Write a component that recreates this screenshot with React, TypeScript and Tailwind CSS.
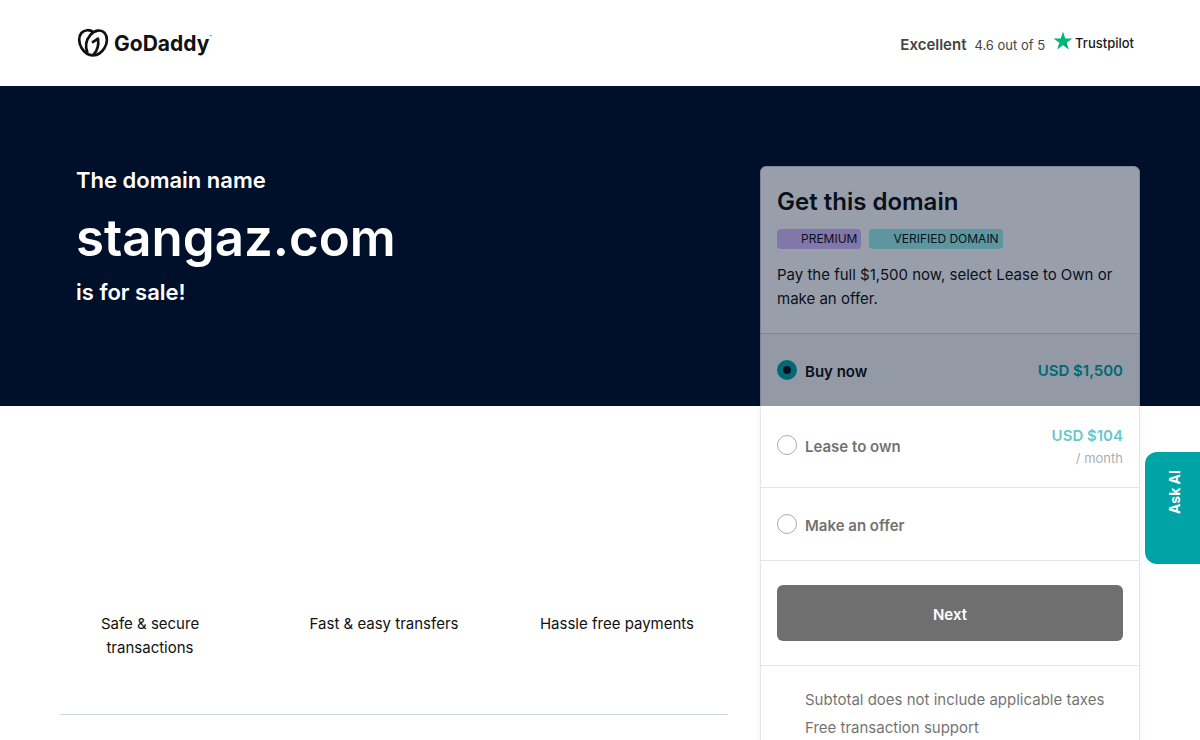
import React from 'react';

const options = [
  { id: 'buy', label: 'Buy now', price: 'USD $1,500', period: '', rowClass: 'h-18' },
  { id: 'lease', label: 'Lease to own', price: 'USD $104', period: '/ month', rowClass: 'h-[82px] border-b pb-1' },
  { id: 'offer', label: 'Make an offer', price: '', period: '', rowClass: 'h-[73px] border-b' },
];

const benefits = ['Safe & secure transactions', 'Fast & easy transfers', 'Hassle free payments'];

const notes = ['Subtotal does not include applicable taxes', 'Free transaction support'];

const Header: React.FC = () => {
  return (
    <header className="bg-white">
      <div className="mx-auto flex h-[86px] max-w-[1080px] items-center justify-between pr-1.5 pl-4">
        <a href="#" className="flex items-center gap-1 text-[#111]">
          <svg
            className="h-8 w-[34px]"
            viewBox="0 0 34 32"
            fill="none"
            stroke="currentColor"
            strokeWidth="2.7"
            strokeLinejoin="round"
            aria-hidden="true"
          >
            <path d="M17.500 5.200C13.500 2.300 8.500 2.600 5.400 6C2.300 9.600 2.500 15.800 5.600 21C8.400 25.600 12.500 28.300 17 28.300C21.500 28.300 25.800 25.400 28.500 21C31.600 15.800 31.700 9.600 28.700 6C25 1.900 18.500 3 14.200 8.200C10.300 12.900 8.900 19.500 11.500 25.800" />
            <path d="M16 15.600L22 11.700C23 17.800 21.600 23.500 17.200 28" />
          </svg>
          <span className="flex items-start pt-0.5 text-[21px] leading-7 font-bold">
            GoDaddy<span className="text-[4px] leading-4">™</span>
          </span>
        </a>
        <a href="#" className="flex items-center gap-2 leading-5 text-[#444]">
          <span className="pt-1 text-[15px] font-semibold">Excellent</span>
          <span className="pt-1 text-[13px]">4.6 out of 5</span>
          <span className="flex items-center gap-0.5">
            <svg className="mb-1 h-5 w-5" viewBox="0 0 20 20" aria-hidden="true">
              <path fill="#00b67a" d="M10 .5l2.250 6.900h7.250l-5.870 4.260 2.240 6.900L10 14.300l-5.870 4.260 2.240-6.900L.5 7.400h7.250z" />
              <path fill="#009765" d="M14.130 13.200l-.5-1.540L10 14.300z" />
            </svg>
            <span className="text-[13px] font-medium text-[#191919]">Trustpilot</span>
          </span>
        </a>
      </div>
    </header>
  );
};

const DomainCard: React.FC = () => {
  const [selected, setSelected] = React.useState('buy');

  return (
    <form className="mt-20 w-[380px] shrink-0 rounded-md border border-gray-300 bg-white text-[#111] opacity-60 shadow-md">
      <div className="border-b border-gray-300 px-4 pt-4 pb-[22px]">
        <h2 className="text-2xl leading-[38px] font-semibold">Get this domain</h2>
        <div className="mt-2 flex gap-2 text-xs leading-5">
          <span className="rounded-sm bg-[#d8bcff] pr-1 pl-6">PREMIUM</span>
          <span className="rounded-sm bg-[#9bf0ec] pr-1 pl-6">VERIFIED DOMAIN</span>
        </div>
        <p className="mt-[14px] text-[15px] leading-6">
          Pay the full $1,500 now, select Lease to Own or make an offer.
        </p>
      </div>
      <fieldset>
        {options.map((option) => (
          <label
            key={option.id}
            className={`flex items-center border-gray-300 px-4 ${option.rowClass} ${selected === option.id ? 'bg-[#f5f7f8]' : ''}`}
          >
            <input
              type="radio"
              name="option"
              value={option.id}
              checked={selected === option.id}
              onChange={() => setSelected(option.id)}
              className="mr-2 h-5 w-5 appearance-none rounded-full border border-[#767676] bg-white checked:border-6 checked:border-[#00a4a6] checked:bg-[#111]"
            />
            <span className="pt-1 text-[15px] leading-6 font-semibold">{option.label}</span>
            <span className="ml-auto pt-0.5 text-right">
              <span className="block text-[15px] leading-6 font-semibold text-[#00a4a6]">{option.price}</span>
              {option.period && <span className="block text-[13px] leading-5 text-[#767676]">{option.period}</span>}
            </span>
          </label>
        ))}
      </fieldset>
      <div className="border-b border-gray-300 px-4 py-6">
        <button type="button" className="h-14 w-full rounded-md bg-[#111] pt-1 text-[15px] font-semibold text-white">
          Next
        </button>
      </div>
      <ul className="space-y-1 pt-[22px] pr-4 pb-6 pl-11 text-[15px] leading-6">
        {notes.map((note) => (
          <li key={note}>{note}</li>
        ))}
      </ul>
    </form>
  );
};

export default function App() {
  return (
    <div className="min-h-screen bg-white font-['Inter','Liberation_Sans',sans-serif]">
      <Header />
      <main className="bg-[linear-gradient(#00102b_320px,#ffffff_320px)]">
        <div className="mx-auto flex max-w-[1080px] items-start gap-8">
          <div className="min-w-0 flex-1">
            <h1 className="h-80 px-4 pt-20 font-semibold text-white">
              <span className="block text-[22px] leading-7">The domain name</span>
              <span className="block pt-1 text-[51px] leading-[80px]">stangaz.com</span>
              <span className="block text-[22px] leading-7">is for sale!</span>
            </h1>
            <ul className="grid grid-cols-[180fr_288fr_178fr] border-b border-gray-300 pt-[206px] pr-[22px] pb-[54px] text-center text-[15px] leading-6 text-[#111]">
              {benefits.map((benefit) => (
                <li key={benefit} className="px-2">
                  {benefit}
                </li>
              ))}
            </ul>
          </div>
          <DomainCard />
        </div>
      </main>
      <button
        type="button"
        className="fixed top-[452px] right-0 flex h-28 w-[55px] items-start justify-center rounded-l-xl bg-[#00a4a6] pt-[18px] pl-1 text-sm font-bold text-white"
      >
        <span className="rotate-180 [writing-mode:vertical-rl]">Ask AI</span>
      </button>
    </div>
  );
}
